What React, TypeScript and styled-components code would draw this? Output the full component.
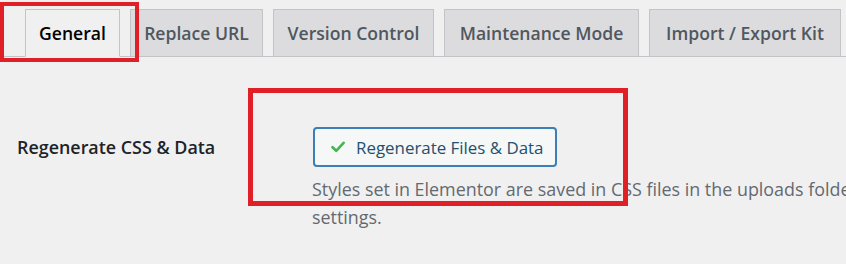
import React from "react";
import styled, { createGlobalStyle } from "styled-components";

const GlobalStyle = createGlobalStyle`
  html, body {
    margin: 0;
    padding: 0;
    background: #f0f0f1;
    overflow: hidden;
  }
  body {
    font-family: "Open Sans", "Noto Sans", "Liberation Sans", sans-serif;
    color: #1d2327;
  }
`;

const Page = styled.div`
  position: relative;
  width: 846px;
  height: 264px;
  overflow: hidden;
  background: #f0f0f1;
`;

const TabBar = styled.nav`
  display: flex;
  gap: 10px;
  padding: 9px 0 0 25px;
  height: 47px;
  border-bottom: 1px solid #c3c4c7;
`;

const Tab = styled.a<{ $active?: boolean; $w: number }>`
  box-sizing: border-box;
  flex: none;
  width: ${(p) => p.$w}px;
  height: 48px;
  margin-bottom: -1px;
  display: flex;
  align-items: center;
  justify-content: center;
  border: 1px solid #c3c4c7;
  border-bottom-color: ${(p) => (p.$active ? "#f0f0f1" : "#c3c4c7")};
  background: ${(p) => (p.$active ? "#f0f0f1" : "#dcdcde")};
  color: ${(p) => (p.$active ? "#000" : "#50575e")};
  font-size: 17.6px;
  font-weight: 600;
  white-space: nowrap;
  text-decoration: none;
`;

const Row = styled.div`
  display: grid;
  grid-template-columns: 295px 1fr;
  padding: 70px 0 0 17px;
`;

const Label = styled.div`
  font-size: 17.9px;
  font-weight: 600;
  line-height: 40px;
  color: #1d2327;
  white-space: nowrap;
`;

const Field = styled.div`
  display: flex;
  flex-direction: column;
  align-items: flex-start;
`;

const Button = styled.button`
  box-sizing: border-box;
  width: 244px;
  height: 40px;
  margin-left: 1px;
  display: flex;
  align-items: center;
  gap: 11px;
  padding: 0 0 0 16px;
  border: 2px solid #3b7fb6;
  border-radius: 4px;
  background: #f6f7f7;
  color: #23506f;
  font-family: inherit;
  font-size: 16.9px;
  font-weight: 400;
  white-space: nowrap;
  cursor: pointer;
`;

const Description = styled.p`
  margin: 8px 0 0;
  font-size: 17.9px;
  line-height: 28px;
  color: #646970;
  white-space: nowrap;
`;

const Highlight = styled.div<{ $l: number; $t: number; $w: number; $h: number; $b: number }>`
  position: absolute;
  box-sizing: border-box;
  left: ${(p) => p.$l}px;
  top: ${(p) => p.$t}px;
  width: ${(p) => p.$w}px;
  height: ${(p) => p.$h}px;
  border: ${(p) => p.$b}px solid #e11f27;
  pointer-events: none;
`;

const tabs = [
  { label: "General", w: 95, active: true },
  { label: "Replace URL", w: 133 },
  { label: "Version Control", w: 161 },
  { label: "Maintenance Mode", w: 195 },
  { label: "Import / Export Kit", w: 192 },
];

const Check = () => (
  <svg width="14" height="12" viewBox="0 0 14 12" aria-hidden="true">
    <path d="M1.5 6.2 L5.2 9.8 L12.6 1.8" fill="none" stroke="#46b450" strokeWidth="2.6" strokeLinecap="round" strokeLinejoin="round" />
  </svg>
);

export default function App() {
  return (
    <Page>
      <GlobalStyle />
      <TabBar>
        {tabs.map((t) => (
          <Tab key={t.label} $active={t.active} $w={t.w}>
            {t.label}
          </Tab>
        ))}
      </TabBar>
      <Row>
        <Label>Regenerate CSS &amp; Data</Label>
        <Field>
          <Button type="button">
            <Check />
            Regenerate Files &amp; Data
          </Button>
          <Description>
            Styles set in Elementor are saved in CSS files in the uploads folder and in the site’s database. Recompile those files and data according to the most recent configuration
            <br />
            settings.
          </Description>
        </Field>
      </Row>
      <Highlight $l={0} $t={2} $w={139} $h={60} $b={4} />
      <Highlight $l={248} $t={88} $w={380} $h={118} $b={5} />
    </Page>
  );
}
